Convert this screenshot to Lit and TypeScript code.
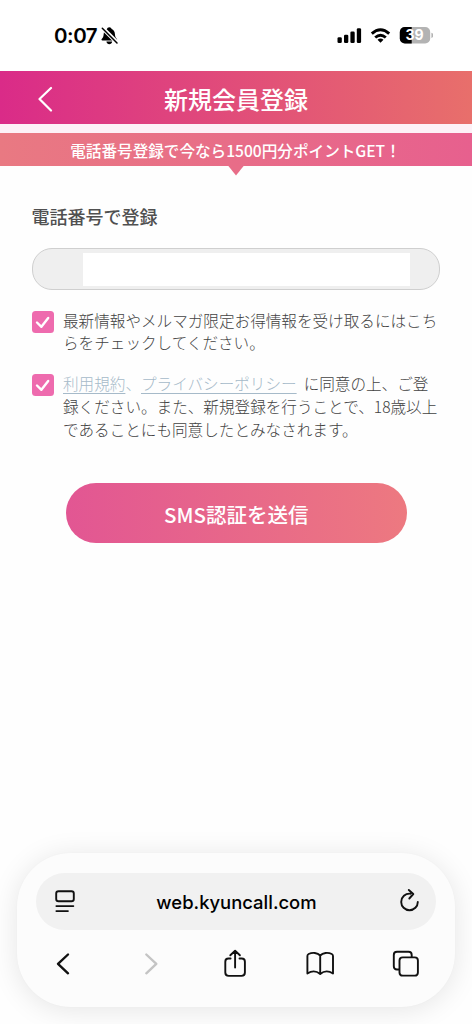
import { LitElement, html, css, svg } from "lit";
import { customElement, property } from "lit/decorators.js";

const line = (d: string, w = 2) =>
  svg`<path d=${d} fill="none" stroke="currentColor" stroke-width=${w} stroke-linecap="round" stroke-linejoin="round"/>`;

@customElement("status-bar")
class StatusBar extends LitElement {
  static styles = css`
    :host { display: flex; height: 71px; box-sizing: border-box; padding: 0 39px 0 54px; align-items: center; color: #000; background: #fff; }
    .time { font: 600 20.5px/24px Inter, "Liberation Sans", sans-serif; letter-spacing: -0.45px; width: 46px; white-space: nowrap; }
    svg { display: block; flex: none; }
    .signal { margin-left: auto; }
    .wifi { margin-left: 7.5px; }
    .battery { margin-left: 8.5px; }
  `;
  render() {
    return html`
      <span class="time">0:07</span>
      <svg width="19" height="20" viewBox="100 25.5 19 20">
        <path d="M109.3 26.800c-1.300 0-2 .8-2.300 1.700-2.100.8-3.200 2.600-3.300 5-.1 2.400-.7 3.700-2 5-.5.7-.2 1.500.7 1.500h13.800c.9 0 1.200-.8.7-1.500-1.300-1.300-1.900-2.600-2-5-.1-2.400-1.200-4.200-3.300-5-.3-.9-1-1.700-2.300-1.700zM106.400 41h5.800c-.3 1.700-1.500 2.700-2.900 2.700s-2.600-1-2.900-2.700z"/>
        <path d="M102.500 27.500L117.500 42.500" stroke="#fff" stroke-width="4"/>
        <path d="M102.300 27.800L117 42.500" stroke="#000" stroke-width="1.500" stroke-linecap="round"/>
      </svg>
      <svg class="signal" width="25" height="20" viewBox="338 25.500 25 20">
        <rect x="338.500" y="36.800" width="4.300" height="5.700" rx="1.300"/>
        <rect x="345" y="34.200" width="4.300" height="8.300" rx="1.300"/>
        <rect x="351.400" y="31" width="4.300" height="11.500" rx="1.300"/>
        <rect x="357.800" y="27.700" width="4.300" height="14.800" rx="1.300"/>
      </svg>
      <svg class="wifi" width="21" height="20" viewBox="370.500 25.500 21 20">
        <path d="M372.300 33.200Q381 25.400 389.700 33.200M375.700 37Q381 32.300 386.300 37" fill="none" stroke="#000" stroke-width="2.900"/>
        <path d="M378 39.200Q381 37 384 39.200L381 42.300z"/>
      </svg>
      <svg class="battery" width="34" height="20" viewBox="399 25.500 34 20">
        <defs><clipPath id="cell"><rect x="399.800" y="26.500" width="30.400" height="16.500" rx="5"/></clipPath></defs>
        <g clip-path="url(#cell)">
          <rect x="399" y="26" width="32" height="18" fill="#b3b3b3"/>
          <rect x="399" y="26" width="12.700" height="18"/>
        </g>
        <path d="M431.400 32.200c1.600.6 2 1.600 2 2.600s-.4 2-2 2.600z" fill="#b3b3b3"/>
        <text x="414.500" y="39.800" text-anchor="middle" font-family="Inter, sans-serif" font-weight="700" font-size="14" fill="#fff">39</text>
      </svg>
    `;
  }
}

@customElement("consent-row")
class ConsentRow extends LitElement {
  static styles = css`
    :host { display: flex; gap: 9px; color: #424242; }
    .box { flex: none; width: 22px; height: 22px; margin-top: 2px; border-radius: 3.500px; background: #ee6bae; color: #fff; }
    .box svg { display: block; }
    .text { font-size: 15.600px; line-height: 22.800px; font-weight: 300; white-space: nowrap; }
  `;
  render() {
    return html`
      <span class="box"><svg width="22" height="22" viewBox="0 0 22 22">${line("M5 11.500L9.400 15.800L16.200 7", 2.400)}</svg></span>
      <div class="text"><slot></slot></div>
    `;
  }
}

@customElement("browser-bar")
class BrowserBar extends LitElement {
  @property() address = "";
  static styles = css`
    :host { display: block; box-sizing: border-box; margin: 0 17px; height: 154px; padding: 19.500px 19px 0; border-radius: 54px; background: #fcfcfc; color: #111; box-shadow: 0 3px 28px rgba(0, 0, 0, .1), 0 0 2px rgba(0, 0, 0, .025); }
    .address { display: flex; align-items: center; justify-content: space-between; height: 57.500px; border-radius: 29px; background: #f1f1f1; padding: 0 14px 0 16px; }
    .url { font: 500 18.450px/24px Inter, "Liberation Sans", sans-serif; color: #000; padding: 1px 1px 0 0; }
    .tools { display: flex; justify-content: space-between; padding: 18px 14px 0 11px; }
    svg { display: block; width: 32px; height: 32px; }
    .address svg { width: 26px; height: 28px; }
    .off { color: #c4c4c4; }
  `;
  render() {
    return html`
      <div class="address">
        <svg viewBox="52 887.500 26 28">${line("M58.500 891.700H71.500Q73.800 891.700 73.800 894V899.500Q73.800 901.800 71.500 901.800H58.500Q56.200 901.800 56.200 899.500V894Q56.200 891.700 58.500 891.700Z", 1.900)}${line("M56.300 906.600H73.400M56.300 911.600H68", 1.700)}</svg>
        <span class="url">${this.address}</span>
        <svg viewBox="396 887.500 26 28">${line("M410.500 894.200C405.300 893.700 401.200 897.500 401.200 902.400A8.300 8.300 0 0 0 417.800 902.400M408.800 890.500L413.300 894.500L409.300 899", 1.900)}</svg>
      </div>
      <div class="tools">
        <svg viewBox="47 948 32 32">${line("M68 954.500L58 963.900L68 973.300", 2.400)}</svg>
        <svg class="off" viewBox="133 948 32 32">${line("M146.300 954.500L156.300 963.900L146.300 973.300", 2.400)}</svg>
        <svg viewBox="219 948 32 32">${line("M230.600 958.500H228.500Q225.300 958.500 225.300 961.700V972.500Q225.300 975.900 228.700 975.900H241.500Q244.900 975.900 244.900 972.500V961.700Q244.900 958.500 241.700 958.500H239.500M235.100 967.500V951.200M230.300 955.300L235.100 950.700L239.900 955.300", 1.900)}</svg>
        <svg viewBox="304 948 32 32">${line("M320.200 955.500C317.500 952.600 312.500 952.100 308.600 954Q307.400 954.600 307.400 956V973.500C311.500 970.800 316.500 970.900 320.200 974C323.900 970.900 328.900 970.800 333 973.500V956Q333 954.600 331.800 954C327.900 952.100 322.900 952.600 320.200 955.500V973.500", 1.900)}</svg>
        <svg viewBox="389.500 948 32 32">${line("M398.500 969.500H396.500Q393.300 969.500 393.300 966.300V955Q393.300 951.800 396.500 951.800H408Q411.200 951.800 411.200 955V957M402.200 957.400H414.200Q417.400 957.400 417.400 960.600V972.400Q417.400 975.600 414.200 975.600H402.200Q399 975.600 399 972.400V960.600Q399 957.400 402.200 957.400Z", 1.900)}</svg>
      </div>
    `;
  }
}

@customElement("app-root")
class AppRoot extends LitElement {
  static styles = css`
    :host { display: flex; flex-direction: column; width: 472px; height: 1024px; overflow: hidden; background: #fefefe; font-family: "Noto Sans CJK JP", sans-serif; }
    .header { display: grid; grid-template-columns: 92px 1fr 92px; align-items: center; height: 53px; background: linear-gradient(90deg, #da2b88, #e86f6b); color: #fff; }
    .header svg { display: block; margin-left: 34px; }
    .title { font-size: 24px; line-height: 36px; font-weight: 500; text-align: center; padding-top: 3px; }
    .strip { background: #fdf1f7; padding-top: 8.500px; }
    .banner { position: relative; height: 33.500px; padding-right: 1px; background: linear-gradient(90deg, #e97982, #e7608e); color: #fff; font-size: 15.600px; line-height: 34px; font-weight: 500; text-align: center; white-space: nowrap; box-sizing: border-box; }
    .pointer { position: absolute; top: 33px; left: 228px; width: 16px; height: 10px; background: #e86d88; clip-path: polygon(0 0, 100% 0, 50% 100%); }
    .form { padding: 37px 32px 0; }
    .label { margin: 0 0 0 -0.500px; font-size: 18px; line-height: 26px; font-weight: 500; color: #505050; }
    .field { box-sizing: border-box; height: 42.500px; margin-top: 18.500px; padding: 4.500px 29.500px 3.500px 49.500px; border: 1.500px solid #cfcfcf; border-radius: 20px; background: #efefef; display: flex; }
    .value { flex: 1; background: #fff; }
    .consents { display: grid; gap: 18.300px; margin-top: 18.500px; }
    a { color: #a6bac9; text-decoration: underline; text-decoration-thickness: 1px; text-underline-offset: 3px; }
    .sep { color: #a6bac9; }
    .policy { margin-right: 7px; }
    .send { display: block; width: 341.500px; height: 60px; margin: 42.700px 0 0 33.500px; padding: 2px 0 0; border: 0; border-radius: 30px; background: linear-gradient(90deg, #e25693, #ed7980); color: #fff; font: 500 20.500px/30px "Noto Sans CJK JP", sans-serif; }
    browser-bar { margin-top: auto; margin-bottom: 17px; }
  `;
  render() {
    return html`
      <status-bar></status-bar>
      <div class="header">
        <svg width="24" height="28" viewBox="34 84.500 24 28">${line("M51 88.500L39.500 99.500L51 111", 2.200)}</svg>
        <div class="title">新規会員登録</div>
      </div>
      <div class="strip">
        <div class="banner">電話番号登録で今なら1500円分ポイントGET！<span class="pointer"></span></div>
      </div>
      <div class="form">
        <h2 class="label">電話番号で登録</h2>
        <div class="field"><div class="value"></div></div>
        <div class="consents">
          <consent-row>最新情報やメルマガ限定お得情報を受け取るにはこち<br>らをチェックしてください。</consent-row>
          <consent-row><a>利用規約</a><span class="sep">、</span><a class="policy">プライバシーポリシー</a>に同意の上、ご登<br>録ください。また、新規登録を行うことで、18歳以上<br>であることにも同意したとみなされます。</consent-row>
        </div>
        <button class="send">SMS認証を送信</button>
      </div>
      <browser-bar address="web.kyuncall.com"></browser-bar>
    `;
  }
}
